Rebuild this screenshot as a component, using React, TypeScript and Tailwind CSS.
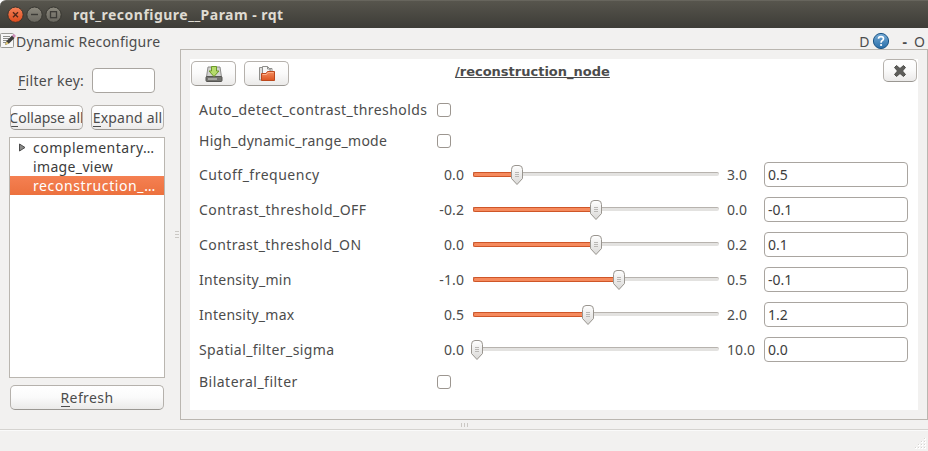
import React from 'react';

const BTN =
  'border border-[#b5b1ac] border-b-[#9a9792] rounded-[5px] bg-gradient-to-b from-white via-[#fafafa] to-[#ebeae9] flex items-center justify-center overflow-hidden whitespace-nowrap';

type Slide = {
  name: string;
  track: string;
  min: string;
  max: string;
  value: string;
  pos: number;
};

const SLIDERS: Slide[] = [
  { name: 'Cutoff_frequency', track: 'tracking-[0.5px]', min: '0.0', max: '3.0', value: '0.5', pos: 44 },
  { name: 'Contrast_threshold_OFF', track: 'tracking-[0.47px]', min: '-0.2', max: '0.0', value: '-0.1', pos: 123 },
  { name: 'Contrast_threshold_ON', track: 'tracking-[0.44px]', min: '0.0', max: '0.2', value: '0.1', pos: 123 },
  { name: 'Intensity_min', track: 'tracking-[0.27px]', min: '-1.0', max: '0.5', value: '-0.1', pos: 146 },
  { name: 'Intensity_max', track: 'tracking-[0.26px]', min: '0.5', max: '2.0', value: '1.2', pos: 115 },
  { name: 'Spatial_filter_sigma', track: 'tracking-[0.41px]', min: '0.0', max: '10.0', value: '0.0', pos: 4 },
];

function Handle() {
  return (
    <svg width="14" height="22" viewBox="0 0 14 22" className="block">
      <path d="M1.5 5.5Q1.5 1.5 5 1.5H9Q12.5 1.5 12.5 5.5V14.5L7 20.5L1.5 14.5Z" fill="url(#handleFill)" stroke="#99958f" />
      <path d="M5 8.5H9M5 10.5H9M5 12.5H9" stroke="#b9b7b4" />
    </svg>
  );
}

function SliderRow({ s }: { s: Slide }) {
  return (
    <div className="flex h-[35px] items-center pl-[9px]">
      <span className={`w-[230px] ${s.track}`}>{s.name}</span>
      <span className="w-[35px] text-right tracking-[0.1px]">{s.min}</span>
      <div className="relative ml-[9px] h-[35px] w-[246px]">
        <div className="absolute left-0 top-[15px] h-[4px] w-[246px] rounded-r-[2px] border-t border-[#b7b3ae] bg-[#e3e2e0]" />
        {s.pos > 10 && (
          <div
            className="absolute left-0 top-[15px] h-[5px] rounded-l-[2px] border-y border-l border-[#cf5628] bg-[#f58a5d]"
            style={{ width: s.pos }}
          />
        )}
        <div className="absolute top-[7px]" style={{ left: s.pos - 7 }}>
          <Handle />
        </div>
      </div>
      <span className="ml-[8px] w-[37px] whitespace-nowrap tracking-[0.1px]">{s.max}</span>
      <div className="flex h-[25px] w-[144px] items-center rounded-[4px] border border-[#a9a5a0] bg-white pl-[3px] text-[#3c3c3c]">{s.value}</div>
    </div>
  );
}

function CheckRow({ name, track }: { name: string; track: string }) {
  return (
    <div className="flex h-[31px] items-center pb-[2px] pl-[9px]">
      <span className={`w-[238px] whitespace-nowrap ${track}`}>{name}</span>
      <div className="h-[14px] w-[14px] rounded-[3px] border border-[#9c9690] bg-white" />
    </div>
  );
}

function Mnemonic({ children }: { children: string }) {
  return <span className="inline-block h-[19px] border-b border-[#4c4c4c] leading-[19px]">{children}</span>;
}

function SaveIcon() {
  return (
    <svg width="18" height="18" viewBox="0 0 18 18">
      <path d="M3 2H15L16.5 12H1.5Z" fill="#d2d2d0" stroke="#8d8d8b" />
      <rect x="1" y="11.5" width="16" height="5" rx="1" fill="#73736f" stroke="#555552" />
      <path d="M3 14H12" stroke="#d7d7d4" />
      <path d="M6.5 1.5H11.5V6H14L9 11.5L4 6H6.5Z" fill="#b5db6b" stroke="#6c9a27" />
    </svg>
  );
}

function FolderIcon() {
  return (
    <svg width="18" height="18" viewBox="0 0 18 18">
      <path d="M1.500 15V2.500H5L6 4H12V15Z" fill="#dededc" stroke="#8f8f8c" />
      <path d="M4.500 9V1.500H9.500L12 4V9Z" fill="#f7f7f7" stroke="#8f8f8c" />
      <path d="M9.500 1.500V4H12M12 3.500H14V8" fill="none" stroke="#8f8f8c" />
      <path d="M3.500 8.500H8L9.500 6.500H16.500V15.500H3.500Z" fill="url(#folderFill)" stroke="#bc481d" />
      <path d="M4.500 9.500H8.500L10 7.500H15.500" fill="none" stroke="#ffb08a" />
    </svg>
  );
}

function TitleBar() {
  return (
    <div className="h-[28px] bg-white">
      <div className="flex h-[28px] items-center rounded-tl-[6px] border-t border-[#67655d] bg-gradient-to-b from-[#57554d] to-[#3d3c37] pl-[7px]">
        <svg width="56" height="18" viewBox="0 0 56 18">
          <circle cx="8.500" cy="8.700" r="7.700" fill="url(#closeFill)" stroke="#36332c" />
          <path d="M6 6.200L11 11.200M11 6.200L6 11.200" stroke="#51281a" strokeWidth="1.400" />
          <circle cx="27.500" cy="8.700" r="7.700" fill="url(#dotFill)" stroke="#36352f" />
          <path d="M24 8.500H31" stroke="#3c3b37" strokeWidth="1.400" />
          <circle cx="46.500" cy="8.700" r="7.700" fill="url(#dotFill)" stroke="#36352f" />
          <rect x="43.500" y="5.700" width="6" height="6" fill="none" stroke="#3c3b37" strokeWidth="1.300" />
        </svg>
        <span className="ml-[10px] whitespace-nowrap text-[14px] font-bold tracking-[0.48px] text-[#dfdbd2]">rqt_reconfigure__Param - rqt</span>
      </div>
    </div>
  );
}

function DockHeader() {
  return (
    <div className="flex h-[21px] items-start pt-[4px]">
      <svg width="16" height="17" viewBox="0 0 16 17" className="shrink-0">
        <rect x="0.500" y="1.500" width="13" height="14" rx="1" fill="#f7f7f7" stroke="#9a9a96" />
        <path d="M3 4.500H10M3 6.500H9M3 8.500H7M3 10.500H6" stroke="#8d8d8a" />
        <path d="M5 13L6.500 9L12 3.500L14.500 6L9 11.500Z" fill="#3e3e3c" />
        <path d="M5 13L6.500 9.500L8.800 11.600Z" fill="#e9cf76" />
        <path d="M12 3.500L13.200 2.300Q14.500 1.800 15.300 3T15 5.300L14.300 6Z" fill="#cf8fb9" />
      </svg>
      <span className="whitespace-nowrap leading-[20px] tracking-[0.2px]">Dynamic Reconfigure</span>
      <span className="ml-auto leading-[20px]">D</span>
      <svg width="18" height="18" viewBox="0 0 18 18" className="ml-[2px]">
        <circle cx="9" cy="9" r="7.600" fill="url(#helpFill)" stroke="#1c5586" />
        <path d="M6.500 6.800Q6.500 4.600 9 4.600T11.500 6.700Q11.500 8 10 8.800Q9.100 9.300 9.100 10.800" fill="none" stroke="white" strokeWidth="1.700" />
        <circle cx="9.100" cy="13" r="1.100" fill="white" />
      </svg>
      <span className="ml-[13px] font-bold leading-[19px]">-</span>
      <span className="ml-[7px] mr-[3px] leading-[20px]">O</span>
    </div>
  );
}

function Sidebar() {
  return (
    <div className="flex w-[180px] shrink-0 flex-col pl-[9px]">
      <div className="mt-[19px] flex h-[25px] items-center pl-[9px]">
        <span className="w-[74px] whitespace-nowrap tracking-[0.3px]">
          <Mnemonic>F</Mnemonic>ilter key:
        </span>
        <div className="h-[25px] w-[63px] rounded-[4px] border border-[#a9a5a0] bg-white" />
      </div>
      <div className="mt-[12px] flex gap-[8px]">
        <div className={`${BTN} ml-[1px] h-[25px] w-[73px]`}>
          <span>
            <Mnemonic>C</Mnemonic>ollapse all
          </span>
        </div>
        <div className={`${BTN} h-[25px] w-[73px]`}>
          <span className="tracking-[0.2px]">
            <Mnemonic>E</Mnemonic>xpand all
          </span>
        </div>
      </div>
      <div className="mt-[7px] h-[241px] w-[156px] border border-[#bab6b0] bg-white text-[#3c3c3c]">
        <div className="flex h-[19px] items-center">
          <svg width="23" height="9" viewBox="0 0 23 9" className="shrink-0">
            <path d="M9.500 1L15 4.500L9.500 8Z" fill="#8a8a88" stroke="#4c4c4c" />
          </svg>
          <span className="tracking-[0.52px]">complementary…</span>
        </div>
        <div className="h-[19px] pl-[23px] leading-[19px] tracking-[0.35px]">image_view</div>
        <div className="h-[19px] bg-gradient-to-b from-[#f58052] to-[#ec713e] pl-[23px] leading-[19px] tracking-[0.6px] text-white">reconstruction_…</div>
      </div>
      <div className={`${BTN} ml-[1px] mt-[7px] h-[25px] w-[154px]`}>
        <span className="tracking-[0.4px]">
          <Mnemonic>R</Mnemonic>efresh
        </span>
      </div>
    </div>
  );
}

export default function App() {
  return (
    <div className="flex h-[451px] w-[928px] flex-col overflow-hidden bg-[#f2f1f0] font-['Noto_Sans','Open_Sans',sans-serif] text-[14px] leading-[19px] text-[#4c4c4c]">
      <svg width="0" height="0" className="absolute">
        <defs>
          <linearGradient id="handleFill" x2="0" y2="1">
            <stop stopColor="#ffffff" />
            <stop offset="1" stopColor="#d9d8d6" />
          </linearGradient>
          <linearGradient id="folderFill" x2="0" y2="1">
            <stop stopColor="#f59061" />
            <stop offset="1" stopColor="#dc5420" />
          </linearGradient>
          <linearGradient id="closeFill" x2="0" y2="1">
            <stop stopColor="#f58259" />
            <stop offset="1" stopColor="#de4b1c" />
          </linearGradient>
          <linearGradient id="dotFill" x2="0" y2="1">
            <stop stopColor="#8c897e" />
            <stop offset="1" stopColor="#68665e" />
          </linearGradient>
          <linearGradient id="helpFill" x2="0" y2="1">
            <stop stopColor="#77acd6" />
            <stop offset="1" stopColor="#276da8" />
          </linearGradient>
        </defs>
      </svg>
      <TitleBar />
      <DockHeader />
      <div className="flex h-[371px]">
        <Sidebar />
        <div className="-ml-[5px] flex w-[5px] flex-col justify-center gap-[2px]">
          <i className="h-px w-[4px] bg-[#cbc8c4]" />
          <i className="h-px w-[4px] bg-[#cbc8c4]" />
          <i className="h-px w-[4px] bg-[#cbc8c4]" />
        </div>
        <div className="w-[748px] border border-[#bab6b0] p-[9px]">
          <div className="h-[351px] w-[728px] bg-white">
            <div className="flex h-[36px] items-start">
              <div className={`${BTN} ml-[1px] mt-[2px] h-[25px] w-[45px]`}>
                <SaveIcon />
              </div>
              <div className={`${BTN} ml-[8px] mt-[2px] h-[25px] w-[45px]`}>
                <FolderIcon />
              </div>
              <span className="ml-[166px] mt-[4px] whitespace-nowrap font-['DejaVu_Sans',sans-serif] text-[13px] font-bold leading-[17px] underline">
                /reconstruction_node
              </span>
              <div className={`${BTN} ml-auto mr-[1px] h-[23px] w-[34px]`}>
                <svg width="14" height="14" viewBox="0 0 14 14">
                  <path
                    d="M1.500 3.500L3.500 1.500L7 4.500L10.500 1.500L12.500 3.500L9.500 7L12.500 10.500L10.500 12.500L7 9.500L3.500 12.500L1.500 10.500L4.500 7Z"
                    fill="#5e5e5b"
                    stroke="#4e4e4b"
                    strokeLinejoin="round"
                  />
                </svg>
              </div>
            </div>
            <CheckRow name="Auto_detect_contrast_thresholds" track="tracking-[0.44px]" />
            <CheckRow name="High_dynamic_range_mode" track="tracking-[0.26px]" />
            {SLIDERS.map((s) => (
              <SliderRow key={s.name} s={s} />
            ))}
            <CheckRow name="Bilateral_filter" track="tracking-[0.48px]" />
          </div>
        </div>
      </div>
      <div className="flex h-[9px] items-center justify-center gap-[2px]">
        <i className="h-[4px] w-px bg-[#cbc8c4]" />
        <i className="h-[4px] w-px bg-[#cbc8c4]" />
        <i className="h-[4px] w-px bg-[#cbc8c4]" />
      </div>
      <div className="flex h-[22px] items-end justify-end border-t border-[#d5d3d0] pb-[1px] shadow-[inset_0_1px_0_#fafafa]">
        <svg width="13" height="12" viewBox="0 0 13 12">
          <path
            d="M9 0h2v2h-2zM6 3h2v2h-2zM9 3h2v2h-2zM3 6h2v2h-2zM6 6h2v2h-2zM9 6h2v2h-2zM0 9h2v2h-2zM3 9h2v2h-2zM6 9h2v2h-2zM9 9h2v2h-2z"
            fill="white"
          />
          <path
            d="M9 0h1v1h-1zM6 3h1v1h-1zM9 3h1v1h-1zM3 6h1v1h-1zM6 6h1v1h-1zM9 6h1v1h-1zM0 9h1v1h-1zM3 9h1v1h-1zM6 9h1v1h-1zM9 9h1v1h-1z"
            fill="#d6d4d1"
          />
        </svg>
      </div>
    </div>
  );
}
